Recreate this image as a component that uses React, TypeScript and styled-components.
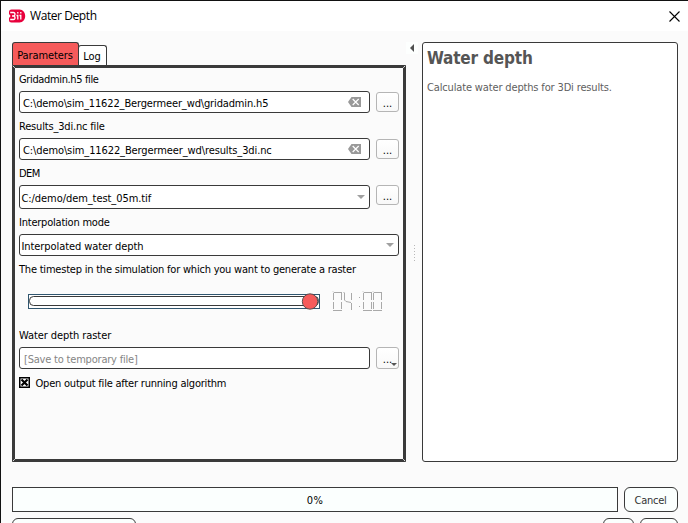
import React from "react";
import styled, { createGlobalStyle } from "styled-components";

const ink = "#3a3a3a";

const GlobalStyle = createGlobalStyle`
  * { box-sizing: border-box; }
  body { margin: 0; overflow: hidden; }
`;

const Window = styled.div`
  width: 688px;
  height: 523px;
  overflow: hidden;
  display: flex;
  flex-direction: column;
  background: #fbfbfb;
  border-top: 1px solid #111;
  border-left: 1px solid #111;
  font-family: "DejaVu Sans Condensed", "DejaVu Sans", sans-serif;
  font-stretch: condensed;
  font-size: 11px;
  line-height: 14px;
  color: #000;
`;

const TitleBar = styled.header`
  flex: none;
  height: 30px;
  display: flex;
  align-items: center;
  padding: 0 8px;
  background: #fff;
`;

const Title = styled.h1`
  flex: 1;
  margin: 0 0 0 4px;
  font: 400 12px/16px "Open Sans", "Noto Sans", sans-serif;
  letter-spacing: -0.42px;
`;

const Columns = styled.main`
  flex: none;
  height: 420px;
  margin-top: 11px;
  padding: 0 9px 0 11px;
  display: flex;
`;

const TabColumn = styled.section`
  width: 394px;
  display: flex;
  flex-direction: column;
`;

const TabBar = styled.div`
  height: 23px;
  display: flex;
  align-items: flex-end;
`;

const Tab = styled.div<{ $active?: boolean }>`
  width: ${(p) => (p.$active ? 67 : 29)}px;
  height: ${(p) => (p.$active ? 23 : 20)}px;
  margin-left: ${(p) => (p.$active ? 0 : -1)}px;
  padding: ${(p) => (p.$active ? 6 : 4)}px 1px 0 0;
  text-align: center;
  letter-spacing: -0.1px;
  background: ${(p) => (p.$active ? "#f65b5b" : "#fff")};
  border: 1px solid ${ink};
  border-bottom: 0;
  border-radius: 3px 3px 0 0;
`;

const Pane = styled.div`
  flex: 1;
  position: relative;
  display: flex;
  flex-direction: column;
  padding: 4px 4px 0;
  border: 3px solid ${ink};
`;

/* Light mitre mark on a corner of the frame */
const Mitre = styled.svg<{ $right?: boolean; $bottom?: boolean }>`
  position: absolute;
  ${(p) => (p.$right ? "right" : "left")}: -3px;
  ${(p) => (p.$bottom ? "bottom" : "top")}: -3px;
  transform: scale(${(p) => (p.$right ? -1 : 1)}, ${(p) => (p.$bottom ? -1 : 1)});
`;

const Text = styled.span<{ $track?: number }>`
  letter-spacing: ${(p) => p.$track ?? 0}px;
  white-space: nowrap;
`;

const Label = styled.label<{ $gap: number; $track?: number }>`
  height: 14px;
  line-height: 16px;
  margin-bottom: ${(p) => p.$gap}px;
  letter-spacing: ${(p) => p.$track ?? 0}px;
  white-space: nowrap;
`;

const Row = styled.div<{ $gap: number; $height?: number; $align?: string }>`
  height: ${(p) => p.$height ?? 22}px;
  margin-bottom: ${(p) => p.$gap}px;
  display: flex;
  gap: 6px;
  align-items: ${(p) => p.$align ?? "center"};
`;

const Field = styled.div<{ $inset: number; $hint?: boolean }>`
  flex: 1;
  height: 100%;
  display: flex;
  align-items: center;
  justify-content: space-between;
  padding: 3px 4px 0 ${(p) => p.$inset}px;
  background: #fff;
  border: 1px solid ${ink};
  border-radius: 3px;
  color: ${(p) => (p.$hint ? "#858585" : "#000")};
  svg { margin-top: -4px; }
`;

const BrowseButton = styled.button<{ $tall?: boolean }>`
  width: 23px;
  height: ${(p) => (p.$tall ? 22 : 20)}px;
  padding: 3px 0 0;
  display: flex;
  align-items: center;
  justify-content: center;
  position: relative;
  font: inherit;
  background: linear-gradient(#fff, #f8f8f8);
  border: 1px solid #b5b5b5;
  border-radius: 3px;
  svg { position: absolute; right: 1px; bottom: 2px; }
`;

const SliderRow = styled.div`
  height: 20px;
  margin: 0 0 17px 9px;
  display: flex;
  align-items: center;
  gap: 12px;
`;

const CheckRow = styled.div`
  height: 14px;
  display: flex;
  align-items: flex-start;
  gap: 5.5px;
  line-height: 16px;
  svg { margin-top: 1px; }
`;

const Splitter = styled.div`
  width: 16px;
  display: flex;
  flex-direction: column;
  align-items: flex-start;
`;

const Collapse = styled.div`
  width: 12px;
  height: 12px;
  display: flex;
  align-items: center;
  justify-content: center;
  background: #fdfffe;
`;

const Grip = styled.div`
  width: 1px;
  height: 17px;
  margin: 191px 0 0 8px;
  background: repeating-linear-gradient(#b8b8b8 0 1px, transparent 1px 3px);
`;

const Help = styled.aside`
  width: 256px;
  padding: 4px 4px;
  background: #fff;
  border: 1px solid ${ink};
  border-radius: 3px;
  color: #606060;
`;

const HelpTitle = styled.h2`
  margin: 0 0 12px;
  font-size: 17px;
  font-weight: 700;
  line-height: 22px;
  letter-spacing: -0.18px;
  color: #555;
  white-space: nowrap;
`;

const Footer = styled.footer`
  margin-top: 25px;
  padding: 0 10px 0 11px;
  display: flex;
  flex-direction: column;
  gap: 6px;
`;

const FooterRow = styled.div`
  display: flex;
  gap: 6px;
`;

const Progress = styled.div`
  flex: 1;
  height: 25px;
  display: flex;
  align-items: center;
  justify-content: center;
  padding-top: 2px;
  letter-spacing: 0.4px;
  background: #fbfffe;
  border: 1px solid ${ink};
`;

const Button = styled.button<{ $width: number; $push?: boolean }>`
  width: ${(p) => p.$width}px;
  height: 25px;
  padding: 2px 1px 0 0;
  margin-left: ${(p) => (p.$push ? "auto" : 0)};
  font: inherit;
  letter-spacing: -0.25px;
  color: #333;
  background: #fbfffe;
  border: 1px solid ${ink};
  border-radius: 6px;
`;

const Logo = () => (
  <svg width="17" height="14" viewBox="0 0 17 14">
    <path d="M2.5 .5H10.5C14 .5 16.2 3.5 16.2 7S14 13.5 10.5 13.5H2.5Q0 13.5 0 11V9L1.6 7L0 5V3Q0 .5 2.5 .5Z" fill="#e8003c" />
    <path
      d="M1.2 3.5H4.3Q6 3.5 6 5.2T4.3 7H3M4.3 7Q6 7 6 8.8T4.3 10.5H1.2M7.5 6.5H8.8V10.5M10.5 6.5H11.8V10.5M8.8 3V4.5M11.8 3V4.5"
      fill="none"
      stroke="#fff"
      strokeWidth="1.3"
    />
  </svg>
);

const Close = () => (
  <svg width="11" height="11" viewBox="0 0 11 11">
    <path d="M.5.5 10.5 10.5M10.5.5.5 10.5" stroke="#000" strokeWidth="1.1" />
  </svg>
);

const Clear = () => (
  <svg width="13" height="10" viewBox="0 0 13 10">
    <path d="M0 5 3.5 0H13V10H3.5Z" fill="#999" />
    <path d="m4.7 2 6 6m0-6-6 6" stroke="#fff" strokeWidth="1.2" />
  </svg>
);

const ClearSlot = styled.span`
  display: flex;
  margin-right: 4px;
`;

const Arrow = ({ dark = false }: { dark?: boolean }) => (
  <svg width={dark ? 6 : 8} height={dark ? 3 : 4} viewBox="0 0 8 4">
    <path d="M0 0H8L4 4Z" fill={dark ? "#555" : "#a0a0a0"} />
  </svg>
);

const Slider = () => (
  <svg width="292" height="17" viewBox="0 0 292 17">
    <rect x=".5" y="1.5" width="291" height="14" fill="#fff" stroke="#31566f" />
    <rect x="1.5" y="3.5" width="289" height="9" rx="4" fill="#fff" stroke={ink} />
    <circle cx="282" cy="8.5" r="7.7" fill="#f65b5b" stroke="#4b4545" strokeWidth=".9" />
  </svg>
);

const zero = "M0 .5 1 1.5H9M.5 2V9M8.5 2V9M.5 11V18M8.5 11V18M0 19.5H9";

const Clock = () => (
  <svg width="52" height="21" viewBox="0 0 52 21" fill="none" stroke="#a9a9a9">
    <path d={zero} transform="translate(1)" />
    <path d="M11.5 1 12.5 2V9L14 10.5L19 11.5M19.5 2V9M19.5 12V19" />
    <path d="M27 6.5h1M27 15.5h1" />
    <path d={zero} transform="translate(31)" />
    <path d={zero} transform="translate(41)" />
  </svg>
);

const Check = () => (
  <svg width="11" height="11" viewBox="0 0 11 11">
    <rect x=".75" y=".75" width="9.5" height="9.5" fill="#fff" stroke="#000" strokeWidth="1.5" />
    <path d="m2.5 2.5 6 6m0-6-6 6" stroke="#000" strokeWidth="2.2" />
  </svg>
);

const Corner = (props: { $right?: boolean; $bottom?: boolean }) => (
  <Mitre width="3" height="3" viewBox="0 0 3 3" {...props}>
    <path d="M.8.8 2.8 2.8" stroke="#ddd" strokeWidth="1" />
  </Mitre>
);

const FilePicker = ({ path, track, gap }: { path: string; track: number; gap: number }) => (
  <Row $gap={gap}>
    <Field $inset={3}>
      <Text $track={track}>{path}</Text>
      <ClearSlot>
        <Clear />
      </ClearSlot>
    </Field>
    <BrowseButton>...</BrowseButton>
  </Row>
);

export default function App() {
  return (
    <>
      <GlobalStyle />
      <Window>
        <TitleBar>
          <Logo />
          <Title>Water Depth</Title>
          <Close />
        </TitleBar>
        <Columns>
          <TabColumn>
            <TabBar>
              <Tab $active>Parameters</Tab>
              <Tab>Log</Tab>
            </TabBar>
            <Pane>
              <Corner />
              <Corner $right />
              <Corner $bottom />
              <Corner $right $bottom />
              <Label $gap={5} $track={-0.36}>Gridadmin.h5 file</Label>
              <FilePicker path="C:\demo\sim_11622_Bergermeer_wd\gridadmin.h5" track={-0.14} gap={6} />
              <Label $gap={5} $track={-0.18}>Results_3di.nc file</Label>
              <FilePicker path="C:\demo\sim_11622_Bergermeer_wd\results_3di.nc" track={-0.11} gap={6} />
              <Label $gap={5} $track={-0.5}>DEM</Label>
              <Row $gap={6} $height={24} $align="flex-start">
                <Field $inset={1.5}>
                  <Text $track={-0.07}>C:/demo/dem_test_05m.tif</Text>
                  <Arrow />
                </Field>
                <BrowseButton>...</BrowseButton>
              </Row>
              <Label $gap={5} $track={-0.22}>Interpolation mode</Label>
              <Row $gap={6}>
                <Field $inset={1.5}>
                  <Text $track={-0.08}>Interpolated water depth</Text>
                  <Arrow />
                </Field>
              </Row>
              <Label $gap={15} $track={-0.215}>
                The timestep in the simulation for which you want to generate a raster
              </Label>
              <SliderRow>
                <Slider />
                <Clock />
              </SliderRow>
              <Label $gap={5} $track={-0.08}>Water depth raster</Label>
              <Row $gap={7}>
                <Field $inset={4} $hint>
                  <Text $track={-0.2}>[Save to temporary file]</Text>
                </Field>
                <BrowseButton $tall>
                  ...
                  <Arrow dark />
                </BrowseButton>
              </Row>
              <CheckRow>
                <Check />
                <Text $track={-0.21}>Open output file after running algorithm</Text>
              </CheckRow>
            </Pane>
          </TabColumn>
          <Splitter>
            <Collapse>
              <svg width="4" height="8" viewBox="0 0 4 8">
                <path d="M4 0V8L0 4Z" fill="#505050" />
              </svg>
            </Collapse>
            <Grip />
          </Splitter>
          <Help>
            <HelpTitle>Water depth</HelpTitle>
            <Text $track={-0.15}>Calculate water depths for 3Di results.</Text>
          </Help>
        </Columns>
        <Footer>
          <FooterRow>
            <Progress>0%</Progress>
            <Button $width={54}>Cancel</Button>
          </FooterRow>
          <FooterRow>
            <Button $width={124} />
            <Button $width={31} $push />
            <Button $width={38} />
          </FooterRow>
        </Footer>
      </Window>
    </>
  );
}
